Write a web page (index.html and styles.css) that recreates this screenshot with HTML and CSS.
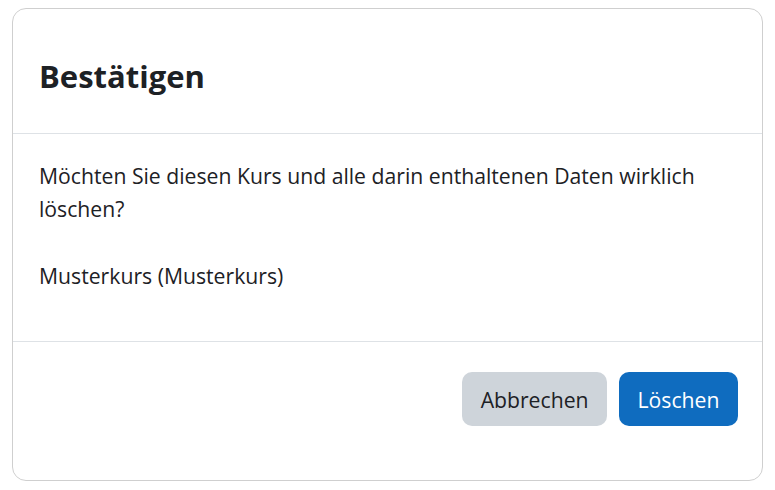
FILE: index.html
```html
<!DOCTYPE html>
<html lang="de">
<head>
    <meta charset="UTF-8">
    <meta name="viewport" content="width=device-width, initial-scale=1.0">
    <title>Bestätigen</title>
    <link rel="stylesheet" href="styles.css">
</head>
<body>
    <div class="modal-dialog" role="dialog">
        <div class="modal-header">
            <h5 class="modal-title">Bestätigen</h5>
        </div>
        <div class="modal-body">
            <p>Möchten Sie diesen Kurs und alle darin enthaltenen Daten wirklich löschen?</p>
            <p>Musterkurs (Musterkurs)</p>
        </div>
        <div class="modal-footer">
            <button class="btn btn-secondary">Abbrechen</button>
            <button class="btn btn-primary">Löschen</button>
        </div>
    </div>
</body>
</html>
```

FILE: styles.css
```css
/* Global styles */
body {
    margin: 0;
    padding: 8px 12px 0;
    font-family: 'Open Sans', 'Noto Sans', sans-serif;
    color: #1d2125;
    background: #fff;
}

/* Dialog box */
.modal-dialog {
    width: 751px;
    height: 473px;
    box-sizing: border-box;
    border: 1px solid #cfcfcf;
    border-radius: 14px;
    display: flex;
    flex-direction: column;
}

.modal-header {
    height: 125px;
    padding: 10px 26px 0;
    box-sizing: border-box;
    display: flex;
    align-items: center;
    border-bottom: 1px solid #dee2e6;
}

.modal-title {
    margin: 0;
    font-size: 31px;
    font-weight: bold;
    line-height: 36px;
}

/* Body text */
.modal-body {
    height: 207px;
    box-sizing: border-box;
    padding: 25px 26px 0;
    font-size: 21.2px;
    line-height: 33px;
}

.modal-body p {
    margin: 0 0 34px;
}

/* Footer with buttons */
.modal-footer {
    flex: 1;
    display: flex;
    justify-content: flex-end;
    align-items: flex-start;
    gap: 12px;
    padding: 30px 24px 0;
    border-top: 1px solid #dee2e6;
}

.btn {
    height: 54px;
    padding: 0 18.5px;
    border: none;
    border-radius: 10px;
    font-family: inherit;
    font-size: 21.2px;
    cursor: pointer;
}

.btn-secondary {
    background-color: #ced4da;
    color: #1d2125;
}

.btn-primary {
    background-color: #0f6cbf;
    color: #fff;
}
```
